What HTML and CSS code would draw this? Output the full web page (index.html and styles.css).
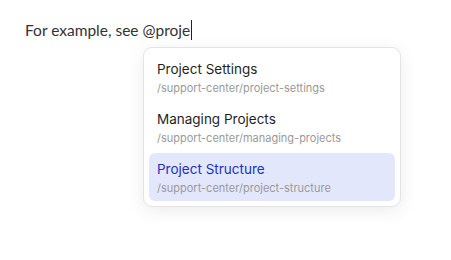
FILE: index.html
```html
<!DOCTYPE html>
<html lang="en">
<head>
    <meta charset="UTF-8">
    <title>Mention Suggestions</title>
    <link rel="stylesheet" href="styles.css">
</head>
<body>
    <div class="editor">
        <p class="line">For example, see @proje<span class="caret"></span></p>
        <div class="menu">
            <div class="item">
                <div class="item-title">Project Settings</div>
                <div class="item-path">/support-center/project-settings</div>
            </div>
            <div class="item">
                <div class="item-title">Managing Projects</div>
                <div class="item-path">/support-center/managing-projects</div>
            </div>
            <div class="item active">
                <div class="item-title">Project Structure</div>
                <div class="item-path">/support-center/project-structure</div>
            </div>
        </div>
    </div>
</body>
</html>
```
FILE: styles.css
```css
body {
    margin: 0;
    background: #fff;
    font-family: Inter, "Noto Sans", sans-serif;
}
.editor {
    padding: 20px 25px;
}
.line {
    margin: 0;
    font-family: Lato, sans-serif;
    font-size: 15.5px;
    line-height: 20px;
    color: #333;
}
.caret {
    display: inline-block;
    width: 1px;
    height: 20px;
    background: #222;
    vertical-align: top;
    margin-left: 1px;
}
.menu {
    margin: 7px 0 0 118px;
    width: 246px;
    padding: 5px;
    background: #fff;
    border: 1px solid #e4e4e4;
    border-radius: 9px;
    box-shadow: 0 4px 18px rgba(0, 0, 0, 0.08);
    display: flex;
    flex-direction: column;
    gap: 2px;
}
.item {
    padding: 6px 8px;
    border-radius: 6px;
}
.item-title {
    font-size: 13.5px;
    line-height: 20px;
    color: #1f1f1f;
}
.item-path {
    font-size: 11px;
    line-height: 14px;
    margin-top: 2px;
    color: #9a9a9a;
}
.item.active {
    background: #e3e7fc;
}
.item.active .item-title {
    color: #2430bf;
}
```
